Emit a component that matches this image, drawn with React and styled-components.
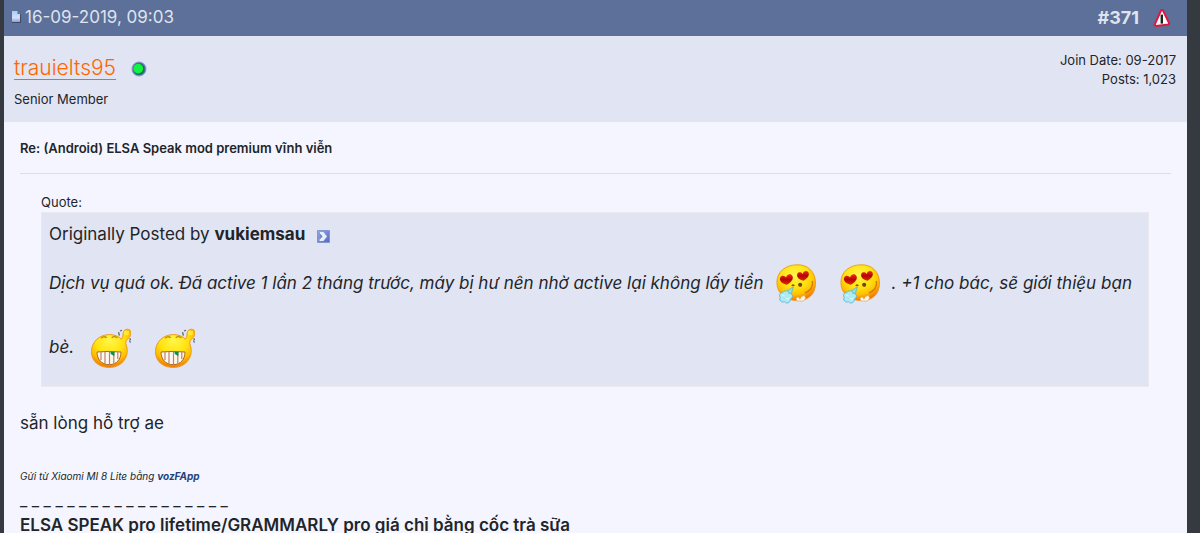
import React from 'react'
import styled, { createGlobalStyle } from 'styled-components'

const GlobalStyle = createGlobalStyle`
  * {
    box-sizing: border-box;
  }
  body {
    margin: 0;
    background-color: #343a40;
    color: #212529;
    font-family: Inter, 'Noto Sans', sans-serif;
    font-size: 17px;
    line-height: 27px;
  }
`

const Page = styled.div`
  height: 100vh;
  overflow: hidden;
  padding: 0 13px 0 4px;
`

const Post = styled.article`
  min-height: 100%;
  background-color: #f5f5ff;
`

const PostHeader = styled.header`
  height: 36px;
  padding: 0 16px 2px 7px;
  display: flex;
  align-items: center;
  justify-content: space-between;
  background-color: #5c7099;
  color: #dfe3ee;
`

const HeaderGroup = styled.div`
  display: flex;
  align-items: center;
  gap: ${(props) => props.$gap}px;
`

const PostNumber = styled.a`
  color: inherit;
  font-size: 18px;
  font-weight: bold;
  text-decoration: none;
`

const ReportButton = styled.button`
  width: 18px;
  height: 20px;
  padding: 2px 0 0;
  border: 0;
  background: none;
`

const UserBar = styled.section`
  height: 86px;
  padding: 15px 11px 0 10px;
  display: flex;
  justify-content: space-between;
  background-color: #e1e4f2;
  font-size: 13px;
  line-height: 19px;
`

const NameRow = styled.div`
  display: flex;
  align-items: center;
  gap: 15px;
  height: 32px;
  margin-bottom: 7px;

  svg {
    margin-top: 4px;
  }
`

const UserName = styled.a`
  color: #ff6600;
  font-size: 21px;
  font-weight: 300;
  text-decoration-thickness: 1px;
  text-underline-offset: 4px;
`

const UserStats = styled.div`
  text-align: right;
`

const PostBody = styled.div`
  padding: 16px;
`

const Title = styled.h1`
  margin: 0;
  padding-bottom: 15px;
  border-bottom: 1px solid #dcdde5;
  font-size: 13px;
  font-weight: 600;
  line-height: 20px;
`

const QuoteBlock = styled.div`
  margin: 18px 22px 23px 21px;
`

const QuoteLabel = styled.div`
  font-size: 13px;
  line-height: 20px;
`

const Quote = styled.blockquote`
  margin: 0;
  padding: 8px 7px 6px;
  border: 1px solid #e9e9ee;
  background-color: #e1e4f2;
`

const QuoteAuthor = styled.div`
  display: flex;
  align-items: center;
  gap: 12px;
  margin-bottom: 4px;
`

const ViewPostLink = styled.a`
  display: flex;
  padding-top: 4px;
`

const QuoteText = styled.p`
  margin: 0;
  font-style: italic;
  line-height: 52px;
`

const Smiley = styled.svg`
  width: 64px;
  height: 64px;
  padding: 12px;
  vertical-align: middle;
`

const Message = styled.p`
  margin: 0 0 29px;
`

const SentFrom = styled.p`
  margin: 0 0 6px;
  font-size: 10px;
  line-height: 20px;
  font-style: italic;

  a {
    color: #22437b;
    font-weight: bold;
    text-decoration: none;
  }
`

const Signature = styled.div`
  font-weight: 600;
  line-height: 22px;
`

const SignatureMark = styled.div`
  margin-bottom: 6px;
  font-size: 16px;
  font-weight: 400;
  line-height: 16px;
`

const PageIcon = () => (
  <svg width="10" height="12" viewBox="0 0 10 12" aria-hidden="true">
    <defs>
      <linearGradient id="sheet" x2="0" y2="1">
        <stop stopColor="#a9cdf0" />
        <stop offset=".6" stopColor="#d2e1fa" />
        <stop offset="1" stopColor="#9199dd" />
      </linearGradient>
    </defs>
    <path d="M0 0h7l3 3v9H0z" fill="#5a6c94" />
    <path d="M9 3h1v9H1v-1h8z" fill="#3f4a64" />
    <path d="M1 0h5.5L9 3v8H1z" fill="url(#sheet)" />
    <path d="M6.5 0L9 3H6.5z" fill="#56688f" />
  </svg>
)

const ReportIcon = () => (
  <svg width="18" height="18" viewBox="0 0 18 18" aria-hidden="true">
    <path d="M8 1.5Q9 .5 10 1.5L16.2 14.4 15.4 15.6 3 17 1.6 15.8z" fill="#fff" stroke="#df1740" strokeWidth="2" strokeLinejoin="round" />
    <path d="M7.6 5.6h2.4v9H7.6z" fill="#17251f" />
  </svg>
)

const OnlineIcon = () => (
  <svg width="16" height="16" viewBox="0 0 16 16" role="img" aria-label="online">
    <circle cx="8" cy="8" r="7" fill="#5368b2" stroke="#8d98c9" />
    <circle cx="8" cy="8" r="5.6" fill="#087c38" />
    <circle cx="7.2" cy="7.6" r="4.9" fill="#10f344" />
  </svg>
)

const ViewPostIcon = () => (
  <svg width="13" height="13" viewBox="0 0 13 13" aria-hidden="true">
    <defs>
      <linearGradient id="view" x2="1" y2="1">
        <stop stopColor="#9cacdc" />
        <stop offset="1" stopColor="#5565c8" />
      </linearGradient>
    </defs>
    <path d="M.5.5h12v12H.5z" fill="url(#view)" stroke="#8296d1" />
    <path d="M3 2h3.4l3.6 4.4L6.4 11H2.5V9l2.4-2.5L3 4.2z" fill="#e7effd" />
    <path d="M3 4.2l2 2.3-2.3 2.3" fill="none" stroke="#5367a2" />
  </svg>
)

const SmileyDefs = () => (
  <svg width="0" height="0" display="block" aria-hidden="true">
    <defs>
      <radialGradient id="face" cx=".46" cy=".3" r=".68">
        <stop stopColor="#fff54a" />
        <stop offset=".5" stopColor="#ffe412" />
        <stop offset=".78" stopColor="#ffc000" />
        <stop offset="1" stopColor="#f17b08" />
      </radialGradient>
      <linearGradient id="heart" x2="0" y2="1">
        <stop stopColor="#ed2818" />
        <stop offset=".5" stopColor="#b70505" />
        <stop offset="1" stopColor="#e12b00" />
      </linearGradient>
    </defs>
  </svg>
)

const LoveSmiley = () => (
  <Smiley viewBox="0 0 40 40" role="img" aria-label="sexy">
    <path d="M21 .8C32 .4 39.5 8 39.5 19c0 11-7 17.6-17.5 17.6C9 36.6.9 29 .9 18.5.9 8 9 1 21 .8z" fill="url(#face)" stroke="#ed9e22" />
    <path d="M11 20.8C5.4 19.4 3 16 4.2 13.4c1.3-2.6 4.4-2 5.8.2.6-3 4.2-4.4 6.1-2.2 2.3 3.2-.9 6.6-5.1 9.4z" fill="url(#heart)" />
    <path d="M27.6 16.8c-5.4-1.4-7.4-4.6-6.2-7.1 1.2-2.4 4.2-1.8 5.2.2.8-2.8 3.7-3.9 5.5-2 2.2 2.9-.5 6.2-4.5 8.9z" fill="url(#heart)" />
    <circle cx="24.2" cy="20.8" r="2.1" fill="#79430a" />
    <path d="M16 22q1-1.8 2.2 0" fill="none" stroke="#a94618" strokeWidth="1.5" />
    <path d="M36.5 17c.7 6-2.5 10-7.5 12" fill="none" stroke="#d97e0b" strokeWidth="1.5" />
    <path d="M17.3 22.8l-2.3 8-5.8-2.4z" fill="#91dceb" stroke="#43b4d4" strokeWidth=".7" />
    <path d="M7 28.5c2-3 6-1.5 6 1 4-.6 4.5 4 1.7 5.3-.6 5-5 5-6.2 2.8-3.5 1.6-6-2-4.2-4.4-2-2-.3-4.8 2.7-4.7z" fill="#aeeaf4" stroke="#61bdd9" />
    <path d="M6 32q1.4-2 2.8.3m1.2 2.2q2 1.5 3.5-.5" fill="none" stroke="#e6fcff" />
    <path d="M20 33.7l2.8-.8 1 2.2 2-2.8 2.8-1 1 3.3-2.5 2.6-6.5-.3z" fill="#fff3df" stroke="#d99a5f" strokeWidth=".6" />
  </Smiley>
)

const GrinSmiley = () => (
  <Smiley viewBox="0 0 40 40" role="img" aria-label="big grin">
    <path d="M30.5 11.2c2.5-3 .2-8 4.2-9.7 5-1.5 7 3.7 3.9 7.5-2 2.3-4.1 2.8-3.9 6.6C40 28 31 39.5 18.5 39.5 7.4 39.5.5 33 .5 23.6.6 13.7 8.3 6.6 18.5 6.6c4.7 0 9.2 1.6 12 4.6z" fill="url(#face)" stroke="#ed9b1d" />
    <ellipse cx="35.5" cy="5" rx="2.6" ry="2.3" fill="#ffed3c" />
    <path d="M10 10.3q3-2.8 5.8-.5M20.7 9.8q2.7-2.7 5.7.2" fill="none" stroke="#c49109" strokeWidth="1.3" />
    <path d="M6 24q12-1.2 24 0c0 7-4 12.5-11.6 12.7C10.3 36.7 6 31 6 24z" fill="#fff9ec" stroke="#af6818" />
    <path d="M10 24v8m4-8.2v12m4.5-12v12.5m4.3-12.2v11m4-11v7" stroke="#ba8074" strokeWidth="1.2" />
    <path d="M19.4 24h4.2l-.3 4.2-3.4-2.2z" fill="#138b4d" />
    <path d="M28.4 7.6l-.8-3.4M29 3l2-.7M38.5 12.5l1 2m-1-4l1.3 1.2" fill="none" stroke="#555b66" strokeWidth="1.2" />
  </Smiley>
)

const App = () => {
  return (
    <Page>
      <GlobalStyle />
      <SmileyDefs />
      <Post>
        <PostHeader>
          <HeaderGroup $gap={4}>
            <PageIcon />
            <time dateTime="2019-09-16T09:03">16-09-2019, 09:03</time>
          </HeaderGroup>
          <HeaderGroup $gap={14}>
            <PostNumber href="#371">#371</PostNumber>
            <ReportButton type="button" aria-label="Report post">
              <ReportIcon />
            </ReportButton>
          </HeaderGroup>
        </PostHeader>

        <UserBar>
          <div>
            <NameRow>
              <UserName href="#user">trauielts95</UserName>
              <OnlineIcon />
            </NameRow>
            <div>Senior Member</div>
          </div>
          <UserStats>
            <div>Join Date: 09-2017</div>
            <div>Posts: 1,023</div>
          </UserStats>
        </UserBar>

        <PostBody>
          <Title>Re: (Android) ELSA Speak mod premium vĩnh viễn</Title>
          <QuoteBlock>
            <QuoteLabel>Quote:</QuoteLabel>
            <Quote>
              <QuoteAuthor>
                <span>
                  Originally Posted by <strong>vukiemsau</strong>
                </span>
                <ViewPostLink href="#post" aria-label="View post">
                  <ViewPostIcon />
                </ViewPostLink>
              </QuoteAuthor>
              <QuoteText>
                Dịch vụ quá ok. Đã active 1 lần 2 tháng trước, máy bị hư nên nhờ active lại không lấy tiền
                <LoveSmiley />
                <LoveSmiley />. +1 cho bác, sẽ giới thiệu bạn bè. <GrinSmiley />
                <GrinSmiley />
              </QuoteText>
            </Quote>
          </QuoteBlock>
          <Message>sẵn lòng hỗ trợ ae</Message>
          <SentFrom>
            Gửi từ Xiaomi MI 8 Lite bằng <a href="#vozfapp">vozFApp</a>
          </SentFrom>
          <Signature>
            <SignatureMark>_ _ _ _ _ _ _ _ _ _ _ _ _ _ _ _ _ _</SignatureMark>
            <div>ELSA SPEAK pro lifetime/GRAMMARLY pro giá chỉ bằng cốc trà sữa</div>
          </Signature>
        </PostBody>
      </Post>
    </Page>
  )
}

export default App
